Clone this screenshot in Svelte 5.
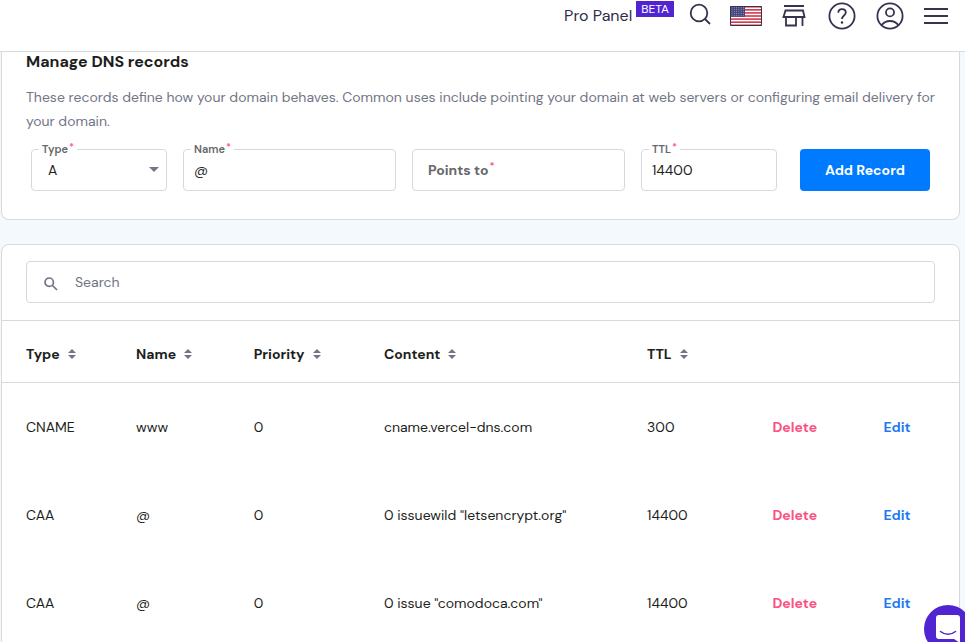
<script>
  const columns = ['Type', 'Name', 'Priority', 'Content', 'TTL'];
  const records = [
    { type: 'CNAME', name: 'www', priority: 0, content: 'cname.vercel-dns.com', ttl: 300 },
    { type: 'CAA', name: '@', priority: 0, content: '0 issuewild "letsencrypt.org"', ttl: 14400 },
    { type: 'CAA', name: '@', priority: 0, content: '0 issue "comodoca.com"', ttl: 14400 }
  ];
  const stripes = [0, 1, 2, 3, 4, 5, 6];
  const starRows = [0, 1, 2, 3, 4];
  const starCols = [0, 1, 2, 3, 4, 5];

  let type = $state('A');
  let name = $state('@');
  let pointsTo = $state('');
  let ttl = $state('14400');
  let query = $state('');

  const shown = $derived(
    records.filter((r) => `${r.type} ${r.name} ${r.content}`.toLowerCase().includes(query.toLowerCase()))
  );
</script>

<div class="app">
  <header>
    <a class="pro" href="#pro">Pro Panel</a>
    <span class="beta">BETA</span>
    <nav>
      <button aria-label="Search">
        <svg viewBox="0 0 32 32"><circle cx="17" cy="13" r="8.3" /><path d="M23 19l5 5" /></svg>
      </button>
      <button aria-label="Language">
        <svg viewBox="0 0 32 32">
          <rect x="0" y="6" width="32" height="20" rx="1.5" fill="#fff" stroke="none" />
          {#each stripes as i}
            <rect x="0" y={6 + i * 3.08} width="32" height="1.54" fill="#d02f44" stroke="none" />
          {/each}
          <rect x="0" y="6" width="15" height="10.8" fill="#46467f" stroke="none" />
          {#each starRows as r}
            {#each starCols as c}
              <circle cx={2 + c * 2.3} cy={7.8 + r * 1.9} r=".45" fill="#d5d5e8" stroke="none" />
            {/each}
          {/each}
          <rect x=".5" y="6.5" width="31" height="19" rx="1.5" stroke-width="1" />
        </svg>
      </button>
      <button aria-label="Store">
        <svg viewBox="0 0 32 32">
          <path d="M6 6h20M7.500 10.500h17.500l1.500 6.500H5.500zM8 17v8.500h10V17M24.500 17v9" />
        </svg>
      </button>
      <button aria-label="Help">
        <svg viewBox="0 0 32 32">
          <circle cx="16" cy="16" r="12.600" />
          <path d="M12.300 12.800c0-2.400 1.600-3.600 3.700-3.600s3.800 1.300 3.800 3.400c0 2.900-3.800 3-3.800 6.400" />
          <circle cx="16" cy="22.500" r="1.200" fill="#2f2b4a" stroke="none" />
        </svg>
      </button>
      <button aria-label="Account">
        <svg viewBox="0 0 32 32">
          <circle cx="16" cy="16" r="12.600" /><circle cx="16" cy="12.400" r="4" />
          <path d="M7.500 25.300c2-2.800 5-4.300 8.500-4.300s6.500 1.500 8.500 4.300" />
        </svg>
      </button>
      <button aria-label="Menu">
        <svg viewBox="0 0 32 32"><path d="M2 9h24M2 16h24M2 23h24" /></svg>
      </button>
    </nav>
  </header>

  <main>
    <section class="card manage">
      <h2>Manage DNS records</h2>
      <p>
        These records define how your domain behaves. Common uses include pointing your domain at web servers or
        configuring email delivery for your domain.
      </p>
      <form onsubmit={(e) => e.preventDefault()}>
        <div class="field type">
          <label for="type">Type<sup>*</sup></label>
          <select id="type" bind:value={type}>
            <option>A</option><option>AAAA</option><option>CNAME</option><option>CAA</option><option>MX</option>
          </select>
          <svg class="caret" viewBox="0 0 10 5"><path d="M0 0h10L5 5z" /></svg>
        </div>
        <div class="field">
          <label for="name">Name<sup>*</sup></label>
          <input id="name" bind:value={name} />
        </div>
        <div class="field" class:empty={!pointsTo}>
          <label for="points">Points to<sup>*</sup></label>
          <input id="points" bind:value={pointsTo} />
        </div>
        <div class="field">
          <label for="ttl">TTL<sup>*</sup></label>
          <input id="ttl" bind:value={ttl} />
        </div>
        <button class="add">Add Record</button>
      </form>
    </section>

    <section class="card list">
      <div class="search">
        <svg viewBox="0 0 14 14"><circle cx="5.200" cy="5.200" r="4.200" /><path d="M8.500 8.500l4.500 4.500" /></svg>
        <input type="search" aria-label="Search" placeholder="Search" bind:value={query} />
      </div>
      <table>
        <thead>
          <tr>
            {#each columns as column}
              <th>
                <button>
                  {column}
                  <svg viewBox="0 0 8 10"><path d="M0 4L4 0l4 4zM0 6h8l-4 4z" /></svg>
                </button>
              </th>
            {/each}
            <th></th><th></th>
          </tr>
        </thead>
        <tbody>
          {#each shown as record}
            <tr>
              <td>{record.type}</td>
              <td>{record.name}</td>
              <td>{record.priority}</td>
              <td>{record.content}</td>
              <td>{record.ttl}</td>
              <td><button class="delete">Delete</button></td>
              <td><button class="edit">Edit</button></td>
            </tr>
          {/each}
        </tbody>
      </table>
    </section>
  </main>

  <button class="chat" aria-label="Open chat">
    <svg viewBox="0 0 24 28">
      <path d="M3 0h18a3 3 0 0 1 3 3v25l-6-4H3a3 3 0 0 1-3-3V3a3 3 0 0 1 3-3z" fill="#fff" />
      <path d="M4.500 16.500c4.500 3.600 10.500 3.600 15 0" fill="none" stroke="#5025d1" stroke-width="1.600" stroke-linecap="round" />
    </svg>
  </button>
</div>

<style>
  :global(body) {
    margin: 0;
  }
  .app {
    display: flex;
    flex-direction: column;
    height: 100vh;
    overflow: hidden;
    background: #f4f9fe;
    color: #1d1e20;
    font: 14px/24px 'DM Sans', Inter, sans-serif;
  }
  .app :is(button, input, select) {
    box-sizing: border-box;
    margin: 0;
    padding: 0;
    border: 0;
    background: none;
    color: inherit;
    font: inherit;
  }
  button {
    cursor: pointer;
  }
  svg {
    display: block;
  }
  header {
    display: flex;
    flex: none;
    justify-content: flex-end;
    align-items: flex-start;
    padding: 0 11px 19px 0;
    border-bottom: 1px solid #d8d9dc;
    background: #fff;
  }
  .pro {
    color: #2f2b4a;
    font-size: 16px;
    line-height: 32px;
    text-decoration: none;
  }
  .beta {
    margin: 1px 8px 0 4px;
    padding: 0 5px;
    background: #5025d1;
    color: #fff;
    font-size: 12px;
    line-height: 16px;
  }
  nav {
    display: flex;
    gap: 16px;
  }
  nav svg {
    width: 32px;
    height: 32px;
    fill: none;
    stroke: #36324f;
    stroke-width: 1.8;
  }
  main {
    flex: 1;
    min-height: 0;
    overflow-y: auto;
    scrollbar-width: none;
  }
  .card {
    margin: 0 5px 24px 1px;
    border: 1px solid #d8d9dc;
    border-radius: 8px;
    background: #fff;
  }
  .manage {
    padding: 0 24px 28px;
    border-top: 0;
    border-radius: 0 0 8px 8px;
  }
  h2 {
    margin: 0;
    font-size: 16px;
    line-height: 20px;
    font-weight: 700;
  }
  p {
    margin: 13px 0 16px;
    color: #727586;
  }
  form {
    display: grid;
    grid-template-columns: 136fr 213fr 213fr 136fr 137fr;
    gap: 16px;
    padding: 0 5px;
  }
  .field {
    position: relative;
    display: flex;
  }
  .app .field :is(input, select) {
    width: 100%;
    height: 42px;
    padding: 0 10px;
    border: 1px solid #d8d9dc;
    border-radius: 4px;
    appearance: none;
  }
  .app .field select {
    padding: 0 16px;
  }
  label {
    position: absolute;
    top: -6px;
    left: 8px;
    padding: 0 3px;
    background: #fff;
    color: #66676c;
    font-size: 11px;
    line-height: 12px;
    font-weight: 600;
  }
  sup {
    margin-left: 1px;
    color: #fc5185;
    font-size: 10px;
    line-height: 0;
    vertical-align: 3px;
  }
  .empty label {
    top: 9px;
    left: 13px;
    font-size: 14px;
    line-height: 24px;
    font-weight: 700;
  }
  .empty sup {
    vertical-align: 6px;
  }
  .caret {
    position: absolute;
    top: 18px;
    right: 8px;
    width: 10px;
    height: 5px;
    fill: #727586;
    pointer-events: none;
  }
  .app .add {
    height: 42px;
    margin-left: 7px;
    border-radius: 4px;
    background: #007bff;
    color: #fff;
    font-weight: 700;
  }
  .search {
    display: flex;
    align-items: center;
    gap: 17px;
    height: 40px;
    margin: 16px 24px 17px;
    padding: 0 17px;
    border: 1px solid #d8d9dc;
    border-radius: 4px;
  }
  .search svg {
    width: 14px;
    height: 14px;
    margin-top: 3px;
    fill: none;
    stroke: #727586;
    stroke-width: 1.7;
  }
  .search input {
    flex: 1;
    min-width: 0;
    outline: 0;
    appearance: none;
  }
  .search input::placeholder {
    color: #727586;
    opacity: 1;
  }
  table {
    width: 100%;
    border-collapse: collapse;
    table-layout: fixed;
  }
  th,
  td {
    padding: 0;
    text-align: left;
  }
  th {
    height: 57px;
    padding-top: 4px;
    border-top: 1px solid #d8d9dc;
    border-bottom: 1px solid #d8d9dc;
  }
  td {
    height: 88px;
  }
  th:first-child,
  td:first-child {
    padding-left: 24px;
  }
  th:nth-child(1) { width: 11.5%; }
  th:nth-child(2) { width: 12.3%; }
  th:nth-child(3) { width: 13.6%; }
  th:nth-child(4) { width: 27.5%; }
  th:nth-child(5) { width: 13.1%; }
  th:nth-child(6) { width: 11.6%; }
  .app th button {
    display: flex;
    align-items: center;
    gap: 8px;
    font-weight: 700;
  }
  th svg {
    width: 8px;
    height: 10px;
    fill: #727586;
  }
  .app .delete {
    color: #fc5185;
    font-weight: 700;
  }
  .app .edit {
    color: #1f7bf5;
    font-weight: 700;
  }
  .app .chat {
    position: fixed;
    right: -7px;
    bottom: -11px;
    width: 48px;
    height: 48px;
    border-radius: 50%;
    background: #5025d1;
  }
  .chat svg {
    width: 24px;
    height: 28px;
    margin: 0 auto;
  }
</style>
